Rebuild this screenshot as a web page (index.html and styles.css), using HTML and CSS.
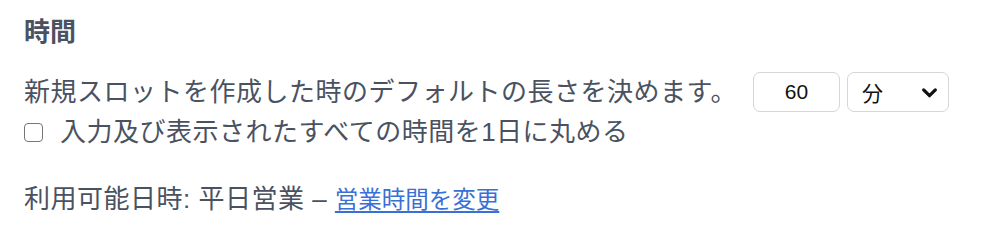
FILE: index.html
```html
<!DOCTYPE html>
<html lang="ja">
<head>
<meta charset="utf-8">
<link rel="stylesheet" href="styles.css">
</head>
<body>
<section class="panel">
  <h2 class="title">時間</h2>
  <div class="row">
    <span class="label">新規スロットを作成した時のデフォルトの長さを決めます。</span>
    <input class="num" type="text" value="60">
    <div class="select">
      <span class="select-text">分</span>
      <svg class="chev" viewBox="0 0 16 16" width="17" height="17"><path d="M2.5 5.5 L8 11 L13.5 5.5" fill="none" stroke="#111" stroke-width="3" stroke-linecap="round" stroke-linejoin="round"/></svg>
    </div>
  </div>
  <label class="check">
    <span class="box"></span>
    <span class="spaced">入力及び表示されたすべての時間を1日に丸める</span>
  </label>
  <p class="avail"><span class="spaced">利用可能日時: 平日営業 – </span><a class="link" href="#">営業時間を変更</a></p>
</section>
</body>
</html>
```
FILE: styles.css
```css
html, body {
  margin: 0;
  padding: 0;
  background: #ffffff;
}
body {
  font-family: "Liberation Sans", "Noto Sans CJK JP", sans-serif;
  color: #4a5261;
  font-size: 26px;
}
.panel {
  padding: 14px 24px 0 24px;
}
.title {
  margin: 0;
  font-size: 26px;
  line-height: 36px;
  font-weight: 700;
  color: #4a5261;
}
.row {
  display: flex;
  align-items: center;
  margin-top: 22px;
  height: 40px;
}
.label {
  line-height: 36px;
  white-space: nowrap;
  letter-spacing: 0.5px;
}
.spaced {
  letter-spacing: 0.5px;
}
.num {
  box-sizing: border-box;
  width: 87px;
  height: 40px;
  margin-left: 16px;
  border: 1px solid #d4d6da;
  border-radius: 7px;
  font-family: "Liberation Sans", Arial, sans-serif;
  font-size: 21px;
  color: #111;
  text-align: center;
  padding: 0;
  outline: none;
}
.select {
  box-sizing: border-box;
  width: 102px;
  height: 40px;
  margin-left: 7px;
  border: 1px solid #d4d6da;
  border-radius: 7px;
  display: flex;
  align-items: center;
  justify-content: space-between;
  padding: 0 10px 0 14px;
}
.select-text {
  font-family: "Noto Sans CJK JP", sans-serif;
  font-size: 21px;
  color: #111;
  line-height: 1;
}
.chev {
  display: block;
}
.check {
  display: flex;
  align-items: center;
  margin-top: 2px;
  line-height: 36px;
}
.box {
  box-sizing: border-box;
  width: 19px;
  height: 19px;
  border: 1.5px solid #767676;
  border-radius: 4px;
  margin-right: 17px;
  background: #fff;
}
.avail {
  margin: 31px 0 0 0;
  line-height: 36px;
}
.link {
  color: #3a6fd6;
  font-size: 23.5px;
  text-decoration: underline;
  text-underline-offset: 3px;
}
```
